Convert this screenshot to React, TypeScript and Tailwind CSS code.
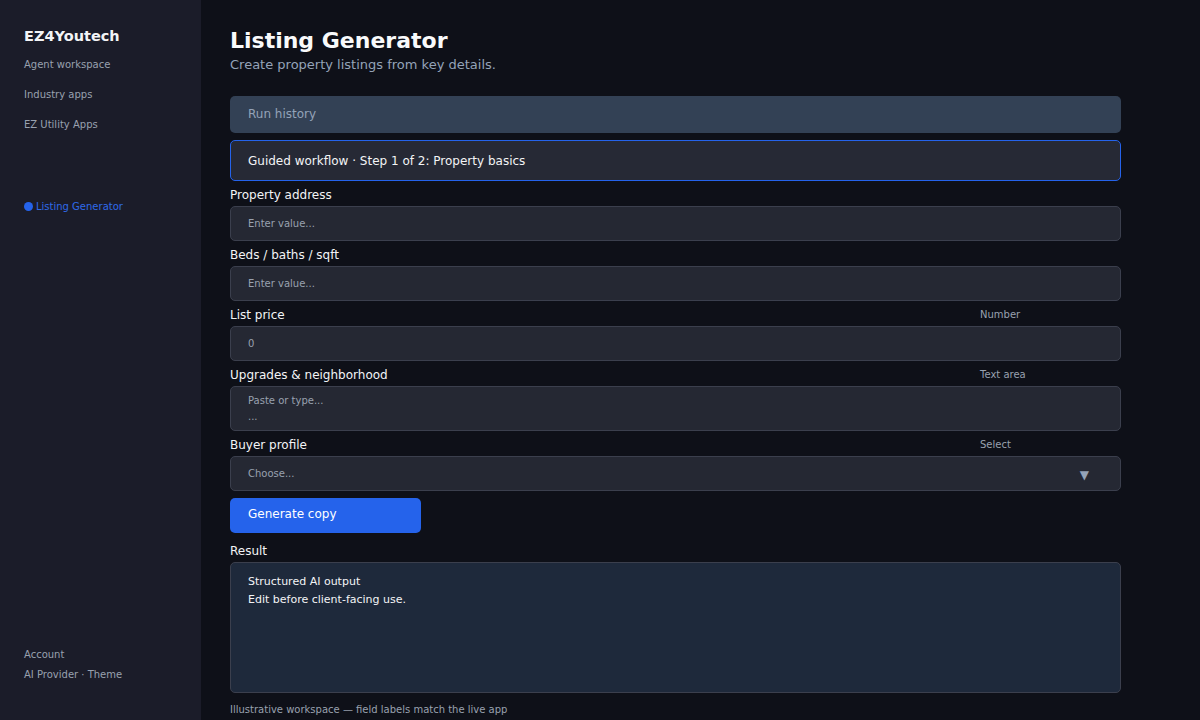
const FONT = { fontFamily: '"DejaVu Sans", "Liberation Sans", sans-serif' };

function Field({
    label,
    tag,
    children,
}: {
    label: string;
    tag?: string;
    children: React.ReactNode;
}) {
    return (
        <div>
            <div className="flex h-[15px] items-center">
                <span className="flex-1 text-[12px] text-gray-100">{label}</span>
                {tag && <span className="w-[141px] text-[10px] text-gray-400">{tag}</span>}
            </div>
            {children}
        </div>
    );
}

const boxCls =
    "mt-[4px] rounded-[5px] border border-[#3b3f4d] bg-[#252833] px-[17px] text-[10px] text-gray-400";

export default function App() {
    return (
        <div className="flex h-[720px] w-[1200px] overflow-hidden bg-[#0e1018]" style={FONT}>
            {/* sidebar */}
            <aside className="flex w-[201px] shrink-0 flex-col bg-[#1b1c29] px-6 pb-[38px] pt-[26px]">
                <div className="text-[14.5px] font-bold leading-[20px] text-gray-100">EZ4Youtech</div>
                <nav className="mt-[11px] flex flex-col gap-[15px] text-[10px] leading-[15px] text-gray-400">
                    <span>Agent workspace</span>
                    <span>Industry apps</span>
                    <span>EZ Utility Apps</span>
                </nav>
                <div className="mt-[67px] flex items-center gap-[3px] text-[10px] leading-[15px] text-[#2f6ae8]">
                    <span className="inline-block h-[9px] w-[9px] rounded-full bg-[#2563eb]" />
                    Listing Generator
                </div>
                <div className="mt-auto flex flex-col gap-[5px] text-[10px] leading-[15px] text-gray-400">
                    <span>Account</span>
                    <span>AI Provider · Theme</span>
                </div>
            </aside>

            {/* main */}
            <main className="flex-1 pl-[29px] pt-[28px]">
                <div className="w-[891px]">
                    <h1 className="text-[22px] font-bold leading-[26px] text-gray-50">Listing Generator</h1>
                    <p className="mt-[2px] text-[13px] leading-[18px] text-[#94a3b8]">Create property listings from key details.</p>

                    <div className="mt-[22px] flex h-[37px] items-center rounded-[5px] bg-[#334155] px-[18px] pb-[2px] text-[12px] text-[#94a3b8]">
                        Run history
                    </div>
                    <div className="mt-[7px] flex h-[41px] items-center rounded-[5px] border border-[#2563eb] bg-[#262935] px-[17px] text-[12px] text-gray-100">
                        Guided workflow · Step 1 of 2: Property basics
                    </div>

                    <div className="mt-[6px] flex flex-col gap-[6px]">
                        <Field label="Property address">
                            <div className={`${boxCls} flex h-[35px] items-center`}>Enter value...</div>
                        </Field>
                        <Field label="Beds / baths / sqft">
                            <div className={`${boxCls} flex h-[35px] items-center`}>Enter value...</div>
                        </Field>
                        <Field label="List price" tag="Number">
                            <div className={`${boxCls} flex h-[35px] items-center`}>0</div>
                        </Field>
                        <Field label="Upgrades & neighborhood" tag="Text area">
                            <div className={`${boxCls} flex h-[45px] flex-col justify-center leading-[16px]`}>
                                <span>Paste or type...</span>
                                <span>...</span>
                            </div>
                        </Field>
                        <Field label="Buyer profile" tag="Select">
                            <div className={`${boxCls} flex h-[35px] items-center justify-between`}>
                                <span>Choose...</span>
                                <span className="mr-[14px] mt-[2px] text-[12px] text-[#94a3b8]">▼</span>
                            </div>
                        </Field>
                    </div>

                    <button className="mt-[7px] flex h-[35px] w-[191px] items-center rounded-[5px] bg-[#2563eb] px-[18px] pb-[3px] text-[12px] text-white">
                        Generate copy
                    </button>

                    <div className="mt-[10px]">
                        <Field label="Result">
                            <div className="mt-[4px] h-[131px] rounded-[5px] border border-[#3b3f4d] bg-[#1e293b] px-[17px] pt-[10px] text-[11px] leading-[18px] text-gray-100">
                                <div>Structured AI output</div>
                                <div>Edit before client-facing use.</div>
                            </div>
                        </Field>
                    </div>

                    <p className="mt-[9px] text-[10px] text-gray-400">
                        Illustrative workspace — field labels match the live app
                    </p>
                </div>
            </main>
        </div>
    );
}
